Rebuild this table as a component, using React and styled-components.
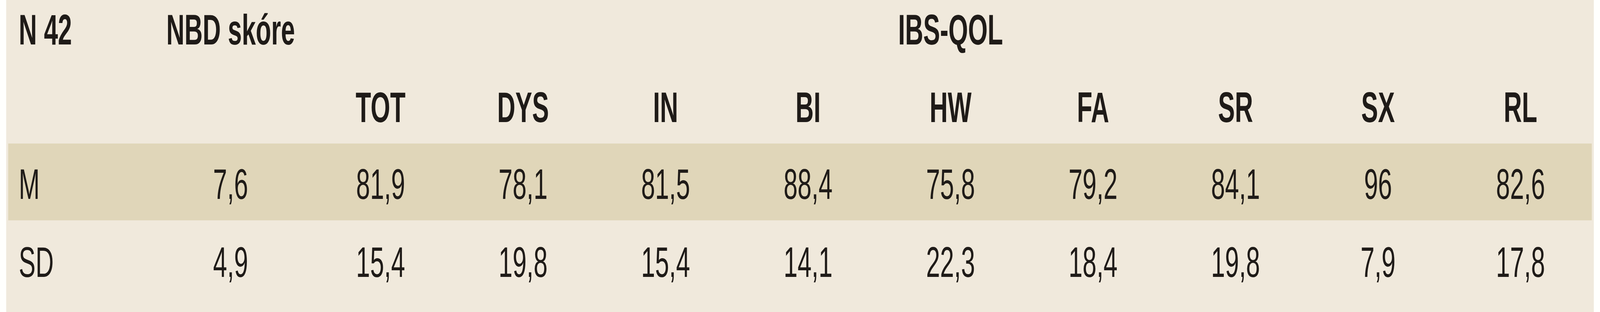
import React from 'react'
import styled, { createGlobalStyle } from 'styled-components'

const GlobalStyle = createGlobalStyle`
  html, body {
    margin: 0;
    padding: 0;
    background: #fffffd;
    overflow: hidden;
  }
`

// the table is drawn at its design width and fitted to the window
const DESIGN_WIDTH = 6993

const columns = ['TOT', 'DYS', 'IN', 'BI', 'HW', 'FA', 'SR', 'SX', 'RL']

const rows = [
  {
    label: 'M',
    nbd: '7,6',
    values: ['81,9', '78,1', '81,5', '88,4', '75,8', '79,2', '84,1', '96', '82,6'],
    highlight: true,
  },
  {
    label: 'SD',
    nbd: '4,9',
    values: ['15,4', '19,8', '15,4', '14,1', '22,3', '18,4', '19,8', '7,9', '17,8'],
  },
]

function useFit() {
  const get = () =>
    typeof window === 'undefined' ? 1 : window.innerWidth / DESIGN_WIDTH
  const [scale, setScale] = React.useState(get)
  React.useEffect(() => {
    const onResize = () => setScale(get())
    window.addEventListener('resize', onResize)
    return () => window.removeEventListener('resize', onResize)
  }, [])
  return scale
}

function App() {
  const scale = useFit()
  return (
    <>
      <GlobalStyle />
      <Viewport>
        <Page style={{ transform: `scaleX(${scale})` }}>
          <Table>
            <Row $height={170} $padTop={0} $padBottom={18}>
              <Cell $bold $left>
                N 42
              </Cell>
              <Cell $bold>NBD skóre</Cell>
              <GroupTitle>IBS-QOL</GroupTitle>
            </Row>
            <Row $height={198}>
              <Cell />
              <Cell />
              {columns.map((c) => (
                <Cell key={c} $bold>
                  {c}
                </Cell>
              ))}
            </Row>
            {rows.map((r) => (
              <Row
                key={r.label}
                $height={r.highlight ? 197 : 202}
                $highlight={r.highlight}
              >
                <Cell $left>{r.label}</Cell>
                <Cell>{r.nbd}</Cell>
                {r.values.map((v, i) => (
                  <Cell key={i}>{v}</Cell>
                ))}
              </Row>
            ))}
          </Table>
        </Page>
      </Viewport>
    </>
  )
}

export default App

const Viewport = styled.div`
  width: 100vw;
  height: 800px;
  overflow: hidden;
`

const Page = styled.div`
  width: ${DESIGN_WIDTH}px;
  height: 800px;
  padding: 0 27px;
  box-sizing: border-box;
  transform-origin: 0 0;
`

const Table = styled.div`
  background: #f0e9dc;
  height: 800px;
  padding: 0 9px;
  box-sizing: border-box;
  font-family: 'Liberation Sans', Arial, sans-serif;
  font-size: 110px;
  color: #1f1b18;
`

const Row = styled.div`
  display: grid;
  grid-template-columns: 628px 688px repeat(9, 1fr);
  align-items: center;
  height: ${(p) => p.$height}px;
  padding-top: ${(p) => p.$padTop ?? 12}px;
  padding-bottom: ${(p) => p.$padBottom ?? 0}px;
  box-sizing: border-box;
  background: ${(p) => (p.$highlight ? '#e0d6b9' : 'transparent')};
`

const Cell = styled.div`
  text-align: ${(p) => (p.$left ? 'left' : 'center')};
  padding-left: ${(p) => (p.$left ? '46px' : '0')};
  font-weight: ${(p) => (p.$bold ? 700 : 400)};
  white-space: nowrap;
  line-height: 1.15;
`

const GroupTitle = styled.div`
  grid-column: 3 / span 9;
  text-align: center;
  font-weight: 700;
  white-space: nowrap;
  line-height: 1.15;
`
